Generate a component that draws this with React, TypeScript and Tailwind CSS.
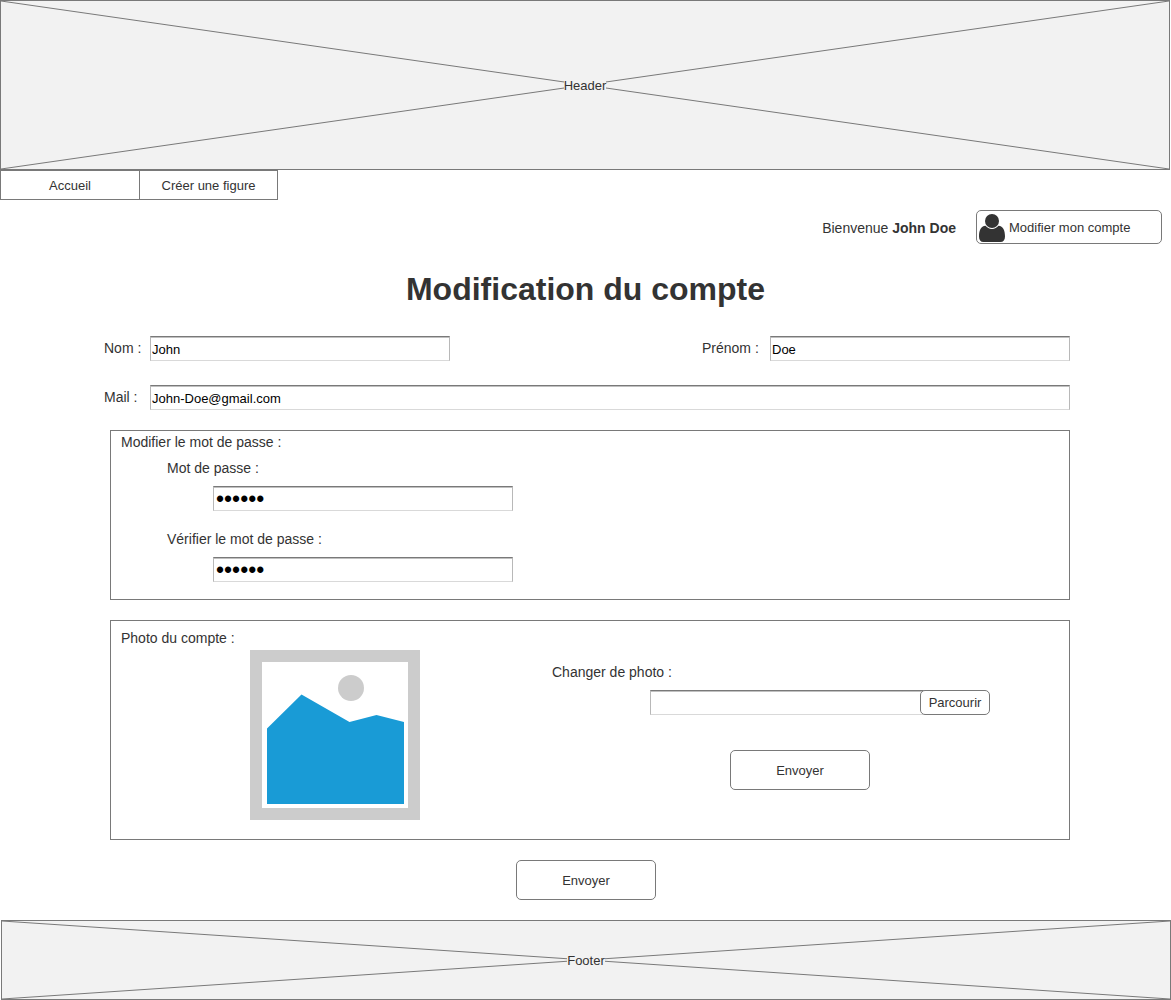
import type { InputHTMLAttributes, ReactNode } from "react";

function CrossedPanel({ label, className }: { label: string; className: string }) {
  return (
    <div className={`relative flex items-center justify-center border border-[#797979] bg-[#f2f2f2] ${className}`}>
      <svg className="absolute inset-0 h-full w-full" aria-hidden="true" stroke="#797979">
        <line x1="0" y1="0" x2="100%" y2="100%" />
        <line x1="0" y1="100%" x2="100%" y2="0" />
      </svg>
      <span className="relative bg-[#f2f2f2] pt-0.5 text-[13px] leading-4">{label}</span>
    </div>
  );
}

function TextField({ className = "", ...props }: InputHTMLAttributes<HTMLInputElement>) {
  return (
    <input
      {...props}
      className={`h-[25px] min-w-0 border border-x-[#b8b8b8] border-t-[#797979] border-b-[#d9d9d9] bg-white pt-0.5 text-black shadow-[inset_0_1px_0_#c0c0c0] outline-none ${className}`}
    />
  );
}

function Button({ className, children, type = "button" }: { className: string; children: ReactNode; type?: "button" | "submit" }) {
  return (
    <button type={type} className={`rounded-[5px] border border-[#797979] bg-white text-[13px] leading-4 ${className}`}>
      {children}
    </button>
  );
}

function UserIcon() {
  return (
    <svg width="26" height="28" viewBox="0 0 26 28" fill="#333333" aria-hidden="true">
      <circle cx="13" cy="7" r="7" />
      <path d="M6.5 11.8C1.8 12 0 16.5 0 22.5C0 26 1.6 28 4.5 28H21.5C24.4 28 26 26 26 22.5C26 16.5 24.2 12 19.5 11.8C17.8 13.9 15.8 14.9 13 14.9S8.2 13.9 6.5 11.8Z" />
    </svg>
  );
}

function PhotoPlaceholder() {
  return (
    <svg width="170" height="170" viewBox="0 0 170 170" role="img" aria-label="Photo du compte">
      <rect width="170" height="170" fill="#cccccc" />
      <rect x="12" y="12" width="146" height="146" fill="#ffffff" />
      <circle cx="101" cy="38" r="13" fill="#cccccc" />
      <path d="M17 78.5L51.5 44.5L99.5 72L126.5 65L154 72V154H17Z" fill="#199bd6" />
    </svg>
  );
}

export default function App() {
  return (
    <div className="min-h-screen bg-white font-['Liberation_Sans',Arial,sans-serif] text-sm leading-4 text-[#333333]">
      <header className="pr-px">
        <CrossedPanel label="Header" className="h-[170px]" />
      </header>
      <nav className="flex text-[13px]">
        <a href="#accueil" className="flex h-[30px] w-[140px] items-center justify-center border border-[#797979] pt-0.5">
          Accueil
        </a>
        <a href="#figure" className="flex h-[30px] w-[138px] items-center justify-center border border-l-0 border-[#797979] pt-0.5">
          Créer une figure
        </a>
      </nav>

      <div className="mt-2.5 flex items-center justify-end gap-5 pr-[9px]">
        <p className="pt-0.5">
          Bienvenue <strong>John Doe</strong>
        </p>
        <Button className="flex h-[34px] w-[186px] items-center gap-1 px-0.5 pt-0.5">
          <UserIcon />
          Modifier mon compte
        </Button>
      </div>

      <main>
        <h1 className="mt-[25px] text-center text-[32px] leading-10 font-bold">Modification du compte</h1>
        <form className="mt-[27px] pr-[101px] pl-[104px]" onSubmit={(e) => e.preventDefault()}>
          <div className="flex items-center justify-between">
            <div className="flex items-center">
              <label htmlFor="nom" className="w-[46px] pb-0.5">Nom :</label>
              <TextField id="nom" defaultValue="John" className="w-[300px] px-px text-[13px]" />
            </div>
            <div className="flex items-center">
              <label htmlFor="prenom" className="w-[68px] pb-0.5">Prénom :</label>
              <TextField id="prenom" defaultValue="Doe" className="w-[300px] px-px text-[13px]" />
            </div>
          </div>
          <div className="mt-6 flex items-center">
            <label htmlFor="mail" className="w-[46px] shrink-0 pb-0.5">Mail :</label>
            <TextField id="mail" type="email" defaultValue="John-Doe@gmail.com" className="flex-1 px-px text-[13px]" />
          </div>

          <section className="mt-5 ml-1.5 flex flex-col border border-[#797979] px-2.5 pt-[3px] pb-[17px]">
            <h2>Modifier le mot de passe :</h2>
            <div className="mt-2.5 ml-[46px] flex flex-col gap-2.5">
              <label htmlFor="passe">Mot de passe :</label>
              <TextField id="passe" type="password" defaultValue="secret" className="ml-[46px] w-[300px] px-0.5 text-[23px]" />
            </div>
            <div className="mt-5 ml-[46px] flex flex-col gap-2.5">
              <label htmlFor="verif">Vérifier le mot de passe :</label>
              <TextField id="verif" type="password" defaultValue="secret" className="ml-[46px] w-[300px] px-0.5 text-[23px]" />
            </div>
          </section>

          <section className="mt-5 ml-1.5 border border-[#797979] px-2.5 pt-[9px] pb-[19px]">
            <h2>Photo du compte :</h2>
            <div className="mt-1 ml-[129px] flex">
              <PhotoPlaceholder />
              <div className="ml-[132px] flex flex-col pt-3.5">
                <label htmlFor="photo">Changer de photo :</label>
                <div className="mt-2.5 ml-[98px] flex">
                  <TextField id="photo" className="w-[275px] px-px text-[13px]" />
                  <Button className="relative -ml-[5px] h-[25px] w-[70px]">Parcourir</Button>
                </div>
                <Button className="mt-[35px] ml-[178px] h-10 w-[140px] pt-0.5">Envoyer</Button>
              </div>
            </div>
          </section>

          <div className="mt-5 flex justify-center pr-0.5">
            <Button type="submit" className="h-10 w-[140px] pt-0.5">Envoyer</Button>
          </div>
        </form>
      </main>

      <footer className="mt-5 pl-px">
        <CrossedPanel label="Footer" className="h-20" />
      </footer>
    </div>
  );
}
